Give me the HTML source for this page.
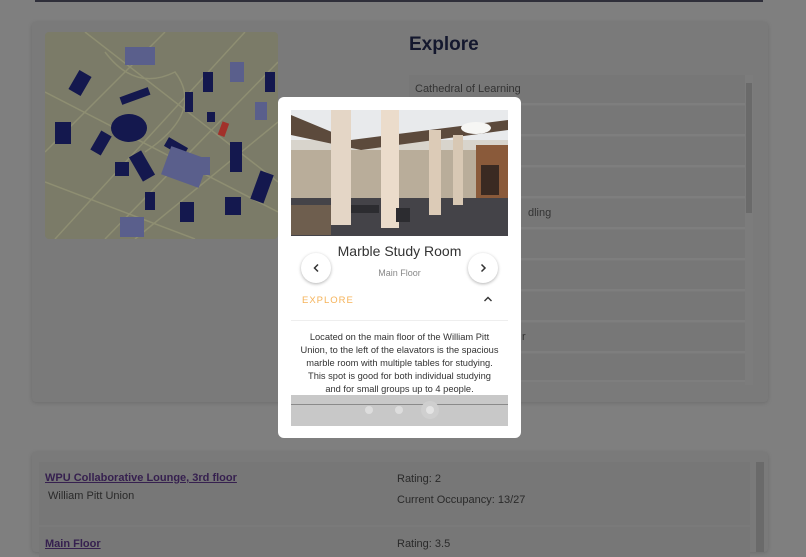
<!DOCTYPE html>
<html><head><meta charset="utf-8"><style>
*{margin:0;padding:0;box-sizing:border-box}
body{width:806px;height:547px;overflow:hidden;background:#7f7f7f;font-family:"Liberation Sans",sans-serif;position:relative}
.abs{position:absolute}
.card{background:#7a7a7a;border-radius:4px;box-shadow:0 1px 4px rgba(0,0,0,.15)}
.item{position:absolute;left:409px;width:336px;height:30px;background:#777;border-bottom:2px solid #7e7e7e;font-size:11px;color:#333;padding:8px 6px}
</style></head><body>
<div class="abs" style="left:35px;top:0;width:728px;height:2px;background:#2f2f3a"></div>
<div class="abs card" style="left:32px;top:22px;width:736px;height:380px"></div>
<svg class="abs" style="left:45px;top:32px" width="233" height="207" viewBox="0 0 233 207">
<rect width="233" height="207" rx="4" fill="#7b7b68"/>
<g stroke="#8e8e72" stroke-width="1.5" fill="none">
<path d="M0 120 L120 0 M10 207 L200 0 M60 207 L233 30 M0 60 L233 180 M40 0 L233 150 M0 150 L150 207 M90 207 L233 90"/>
<path d="M60 20 Q90 60 130 40 Q160 80 100 120"/>
</g>
<g fill="#14184e">
<rect x="28" y="40" width="14" height="22" transform="rotate(30 35 51)"/>
<rect x="10" y="90" width="16" height="22"/>
<ellipse cx="84" cy="96" rx="18" ry="14"/>
<rect x="50" y="100" width="12" height="22" transform="rotate(30 56 111)"/>
<rect x="70" y="130" width="14" height="14"/>
<rect x="90" y="120" width="14" height="28" transform="rotate(-30 97 134)"/>
<rect x="120" y="110" width="22" height="10" transform="rotate(30 131 115)"/>
<rect x="140" y="60" width="8" height="20"/><rect x="158" y="40" width="10" height="20"/>
<rect x="162" y="80" width="8" height="10"/><rect x="185" y="110" width="12" height="30"/>
<rect x="210" y="140" width="14" height="30" transform="rotate(20 217 155)"/>
<rect x="135" y="170" width="14" height="20"/><rect x="100" y="160" width="10" height="18"/>
<rect x="220" y="40" width="10" height="20"/><rect x="180" y="165" width="16" height="18"/>
<rect x="75" y="60" width="30" height="8" transform="rotate(-20 90 64)"/>
</g>
<g fill="#5a5f8c">
<rect x="80" y="15" width="30" height="18"/><rect x="120" y="120" width="40" height="30" transform="rotate(20 140 135)"/>
<rect x="75" y="185" width="24" height="20"/><rect x="185" y="30" width="14" height="20"/>
<rect x="155" y="125" width="10" height="18"/><rect x="210" y="70" width="12" height="18"/>
</g>
<rect x="175" y="90" width="7" height="14" fill="#a2302a" transform="rotate(20 178 97)"/>
</svg>
<div class="abs" style="left:409px;top:34px;font-size:19px;font-weight:bold;color:#14182e">Explore</div>
<div class="item" style="top:75px">Cathedral of Learning</div>
<div class="item" style="top:106px"></div>
<div class="item" style="top:137px"></div>
<div class="item" style="top:168px"></div>
<div class="item" style="top:199px;padding-left:119px">dling</div>
<div class="item" style="top:230px"></div>
<div class="item" style="top:261px"></div>
<div class="item" style="top:292px"></div>
<div class="item" style="top:323px;padding-left:113px">r</div>
<div class="item" style="top:354px;height:28px"></div>
<div class="abs" style="left:745px;top:75px;width:8px;height:310px;background:#7c7c7c"></div>
<div class="abs" style="left:746px;top:83px;width:6px;height:130px;background:#6a6a6a"></div>

<div class="abs card" style="left:32px;top:452px;width:736px;height:100px"></div>
<div class="abs" style="left:39px;top:462px;width:711px;height:63px;background:#777"></div>
<div class="abs" style="left:39px;top:527px;width:711px;height:30px;background:#777"></div>
<div class="abs" style="left:756px;top:462px;width:8px;height:90px;background:#6a6a6a"></div>
<div class="abs" style="left:45px;top:472px;font-size:11px;font-weight:bold;color:#36204f;text-decoration:underline">WPU Collaborative Lounge, 3rd floor</div>
<div class="abs" style="left:48px;top:490px;font-size:11px;color:#2a2a2a">William Pitt Union</div>
<div class="abs" style="left:397px;top:473px;font-size:11px;color:#2a2a2a">Rating: 2</div>
<div class="abs" style="left:397px;top:494px;font-size:11px;color:#2a2a2a">Current Occupancy: 13/27</div>
<div class="abs" style="left:45px;top:538px;font-size:11px;font-weight:bold;color:#36204f;text-decoration:underline">Main Floor</div>
<div class="abs" style="left:397px;top:538px;font-size:11px;color:#2a2a2a">Rating: 3.5</div>

<div class="abs" style="left:278px;top:97px;width:243px;height:341px;background:#fff;border-radius:6px"></div>
<svg class="abs" style="left:291px;top:110px" width="217" height="126" viewBox="0 0 217 126">
<rect width="217" height="126" fill="#d8d4cc"/>
<rect width="217" height="30" fill="#e8eaec"/>
<path d="M0 5 L60 30 L217 10 L217 20 L70 40 L0 25Z" fill="#5c4a3c"/>
<rect x="0" y="40" width="217" height="50" fill="#b9ad9a"/>
<rect x="185" y="35" width="32" height="55" fill="#8a5a3a"/>
<rect x="190" y="55" width="18" height="30" fill="#3a2a22"/>
<rect x="0" y="88" width="217" height="38" fill="#444348"/>
<rect x="40" y="0" width="20" height="115" fill="#e4d6c6"/>
<rect x="90" y="0" width="18" height="118" fill="#ebdccb"/>
<rect x="138" y="20" width="12" height="85" fill="#dccbb7"/>
<rect x="162" y="25" width="10" height="70" fill="#d8c8b4"/>
<rect x="60" y="95" width="28" height="8" fill="#2c2c30"/><rect x="105" y="98" width="14" height="14" fill="#2c2c30"/>
<rect x="0" y="95" width="40" height="30" fill="#6e5e4e"/>
<ellipse cx="185" cy="18" rx="15" ry="6" fill="#f6f6f4"/>
</svg>
<div class="abs" style="left:278px;top:243px;width:243px;text-align:center;font-size:14px;color:#333">Marble Study Room</div>
<div class="abs" style="left:278px;top:268px;width:243px;text-align:center;font-size:9px;color:#888">Main Floor</div>
<div class="abs" style="left:301px;top:253px;width:30px;height:30px;border-radius:50%;background:#fff;box-shadow:0 1px 3px rgba(0,0,0,.3)"><svg width="30" height="30"><path d="M17 11.5 L13.5 15 L17 18.5" stroke="#333" stroke-width="1.5" fill="none"/></svg></div>
<div class="abs" style="left:468px;top:253px;width:30px;height:30px;border-radius:50%;background:#fff;box-shadow:0 1px 3px rgba(0,0,0,.3)"><svg width="30" height="30"><path d="M13.5 11.5 L17 15 L13.5 18.5" stroke="#333" stroke-width="1.5" fill="none"/></svg></div>
<div class="abs" style="left:302px;top:295px;font-size:9.5px;color:#f5b35a;letter-spacing:1px">EXPLORE</div>
<svg class="abs" style="left:483px;top:295px" width="10" height="8"><path d="M1.5 6 L5 2.5 L8.5 6" stroke="#333" stroke-width="1.4" fill="none"/></svg>
<div class="abs" style="left:291px;top:320px;width:217px;height:1px;background:#eee"></div>
<div class="abs" style="left:299px;top:331px;width:201px;text-align:center;font-size:9.3px;line-height:13px;color:#333">Located on the main floor of the William Pitt Union, to the left of the elavators is the spacious marble room with multiple tables for studying. This spot is good for both individual studying and for small groups up to 4 people.</div>
<div class="abs" style="left:291px;top:395px;width:217px;height:31px;background:#c8c8c8"></div>
<div class="abs" style="left:291px;top:404px;width:217px;height:1px;background:#8a8a8a"></div>
<div class="abs" style="left:365px;top:406px;width:8px;height:8px;border-radius:50%;background:#ddd"></div>
<div class="abs" style="left:395px;top:406px;width:8px;height:8px;border-radius:50%;background:#ddd"></div>
<div class="abs" style="left:426px;top:406px;width:8px;height:8px;border-radius:50%;background:#e4e4e4;box-shadow:0 0 0 5px #cfcfcf"></div>
</body></html>
